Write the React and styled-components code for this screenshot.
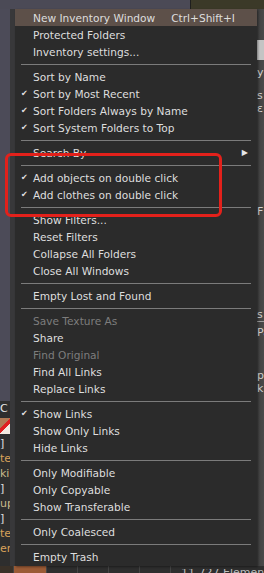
import styled, { createGlobalStyle } from "styled-components";

const Global = createGlobalStyle`
  html, body {
    margin: 0;
    padding: 0;
    background: #3a3a3c;
  }
  body {
    font-family: "DejaVu Sans", "Noto Sans", sans-serif;
  }
`;

// whole screenshot area
const Scene = styled.div`
  position: relative;
  width: 264px;
  height: 573px;
  overflow: hidden;
  display: flex;
  flex-direction: column;
  background: #3a3a3c;
`;

const TopBar = styled.div`
  height: 9px;
  display: flex;
  flex-shrink: 0;
`;

const TopPart = styled.div`
  width: ${(p) => p.$w || "auto"};
  flex: ${(p) => (p.$w ? "none" : 1)};
  background: ${(p) => p.$bg};
  border-right: ${(p) => (p.$edge ? "1px solid #1e1e1e" : "none")};
`;

const Middle = styled.div`
  flex: 1;
  display: flex;
`;

const LeftRail = styled.div`
  width: 15px;
  display: flex;
  background: #3c3c3f;
`;

const RailBlue = styled.div`
  width: 10px;
  display: flex;
  flex-direction: column;
  background: linear-gradient(#4c4b58 0, #4c4b58 392px, #2e2e2e 392px);
  padding-top: 392px;
  box-sizing: border-box;
`;

const RailText = styled.div`
  height: 15px;
  font-size: 11px;
  line-height: 15px;
  color: ${(p) => p.$c || "#c8b98a"};
  white-space: nowrap;
`;

const RailIcon = styled.div`
  height: 16px;
  margin: 2px 0;
  background: linear-gradient(135deg, #b07a55 40%, #e02020 40%, #e02020 58%, #f3e9e0 58%);
`;

const RailShade = styled.div`
  width: 5px;
  background: #38383a;
`;

const Center = styled.div`
  flex: 1;
`;

const RightRail = styled.div`
  width: 7px;
  display: flex;
  flex-direction: column;
  background: linear-gradient(90deg, #3e3e3e, #4a4a4a);
  color: #cfcfcf;
  font-size: 11px;
  line-height: 13px;
  overflow: hidden;
`;

const Gap = styled.div`
  height: ${(p) => p.$h}px;
  flex-shrink: 0;
  background: ${(p) => p.$bg || "transparent"};
`;

const Frag = styled.div`
  height: 13px;
  white-space: nowrap;
  color: ${(p) => p.$c || "#cfcfcf"};
`;

const BottomBar = styled.div`
  height: 7px;
  flex-shrink: 0;
  display: flex;
  align-items: flex-end;
  background: #2e2e2e;
  font-size: 11px;
  color: #bdbdbd;
  overflow: hidden;
`;

const BottomBtn = styled.div`
  width: ${(p) => p.$w}px;
  height: 7px;
  background: ${(p) => p.$bg || "transparent"};
  border-right: 1px solid #444;
  flex-shrink: 0;
`;

const BottomLabel = styled.div`
  line-height: 7px;
  height: 7px;
  padding-left: 10px;
  white-space: nowrap;
  overflow: hidden;
  transform: translateY(3px);
`;

// context menu floating over the window
const Menu = styled.div`
  position: absolute;
  left: 15px;
  top: 9px;
  width: 242px;
  padding-bottom: 1px;
  background: #2b2b2b;
  box-shadow: 1px 1px 2px rgba(0, 0, 0, 0.4);
  font-size: 10.6px;
  color: #dedede;
`;

const Row = styled.div`
  height: 17px;
  display: grid;
  grid-template-columns: 13px 1fr auto;
  align-items: center;
  padding: 0 11px 0 5px;
  background: ${(p) => (p.$active ? "#5d5049" : "transparent")};
  color: ${(p) => (p.$disabled ? "#7d7d7d" : "#dedede")};
  white-space: nowrap;
`;

const Check = styled.span`
  font-size: 8px;
  color: #e6e6e6;
  padding-left: 1px;
`;

const Shortcut = styled.span`
  padding-right: 11px;
`;

const Arrow = styled.span`
  font-size: 8px;
  color: #e6e6e6;
  margin-right: -2px;
`;

const Sep = styled.div`
  height: 8px;
  display: flex;
  align-items: center;
  padding: 0 6px;

  &::after {
    content: "";
    flex: 1;
    height: 1px;
    background: #7b7b7b;
  }
`;

// red annotation drawn over the screenshot
const Highlight = styled.div`
  position: absolute;
  left: 5px;
  top: 153px;
  width: 217px;
  height: 64px;
  box-sizing: border-box;
  border: 3px solid #e3211b;
  border-radius: 6px;
`;

const items = [
  { label: "New Inventory Window", shortcut: "Ctrl+Shift+I", active: true },
  { label: "Protected Folders" },
  { label: "Inventory settings..." },
  "sep",
  { label: "Sort by Name" },
  { label: "Sort by Most Recent", checked: true },
  { label: "Sort Folders Always by Name", checked: true },
  { label: "Sort System Folders to Top", checked: true },
  "sep",
  { label: "Search By", submenu: true },
  "sep",
  { label: "Add objects on double click", checked: true },
  { label: "Add clothes on double click", checked: true },
  "sep",
  { label: "Show Filters..." },
  { label: "Reset Filters" },
  { label: "Collapse All Folders" },
  { label: "Close All Windows" },
  "sep",
  { label: "Empty Lost and Found" },
  "sep",
  { label: "Save Texture As", disabled: true },
  { label: "Share" },
  { label: "Find Original", disabled: true },
  { label: "Find All Links" },
  { label: "Replace Links" },
  "sep",
  { label: "Show Links", checked: true },
  { label: "Show Only Links" },
  { label: "Hide Links" },
  "sep",
  { label: "Only Modifiable" },
  { label: "Only Copyable" },
  { label: "Show Transferable" },
  "sep",
  { label: "Only Coalesced" },
  "sep",
  { label: "Empty Trash" },
];

const App = () => {
  return (
    <>
      <Global />
      <Scene>
        <TopBar>
          <TopPart $w="190px" $bg="#4b4a56" $edge />
          <TopPart $bg="#3b3928" />
        </TopBar>
        <Middle>
          <LeftRail>
            <RailBlue>
              <RailText $c="#e8e8e8">C</RailText>
              <RailIcon />
              <RailText $c="#e0e0e0">]</RailText>
              <RailText $c="#d9a25a">te</RailText>
              <RailText>kir</RailText>
              <RailText $c="#e0e0e0">]</RailText>
              <RailText>up</RailText>
              <RailText $c="#e0e0e0">]</RailText>
              <RailText $c="#d9a25a">te</RailText>
              <RailText $c="#d9a25a">er</RailText>
            </RailBlue>
            <RailShade />
          </LeftRail>
          <Center />
          <RightRail>
            <Gap $h={31} />
            <Gap $h={20} $bg="#c4c4c4" />
            <Gap $h={6} />
            <Frag>yp</Frag>
            <Gap $h={10} />
            <Frag>s</Frag>
            <Frag>ε</Frag>
            <Gap $h={90} />
            <Frag>F</Frag>
            <Gap $h={90} />
            <Frag>s</Frag>
            <Gap $h={1} $bg="#9a9a9a" />
            <Gap $h={4} />
            <Frag>Pa</Frag>
            <Gap $h={30} />
            <Frag>p</Frag>
            <Frag>k</Frag>
          </RightRail>
        </Middle>
        <BottomBar>
          <BottomBtn $w={13} $bg="#3a3128" />
          <BottomBtn $w={32} $bg="#9b5b36" />
          <BottomBtn $w={30} />
          <BottomBtn $w={30} />
          <BottomBtn $w={30} />
          <BottomBtn $w={30} />
          <BottomLabel>11,727 Elements</BottomLabel>
        </BottomBar>

        <Menu>
          {items.map((it, i) =>
            it === "sep" ? (
              <Sep key={i} />
            ) : (
              <Row key={i} $active={it.active} $disabled={it.disabled}>
                <Check>{it.checked ? "✔" : ""}</Check>
                <span>{it.label}</span>
                {it.shortcut && <Shortcut>{it.shortcut}</Shortcut>}
                {it.submenu && <Arrow>▶</Arrow>}
              </Row>
            )
          )}
        </Menu>
        <Highlight />
      </Scene>
    </>
  );
};

export default App;
